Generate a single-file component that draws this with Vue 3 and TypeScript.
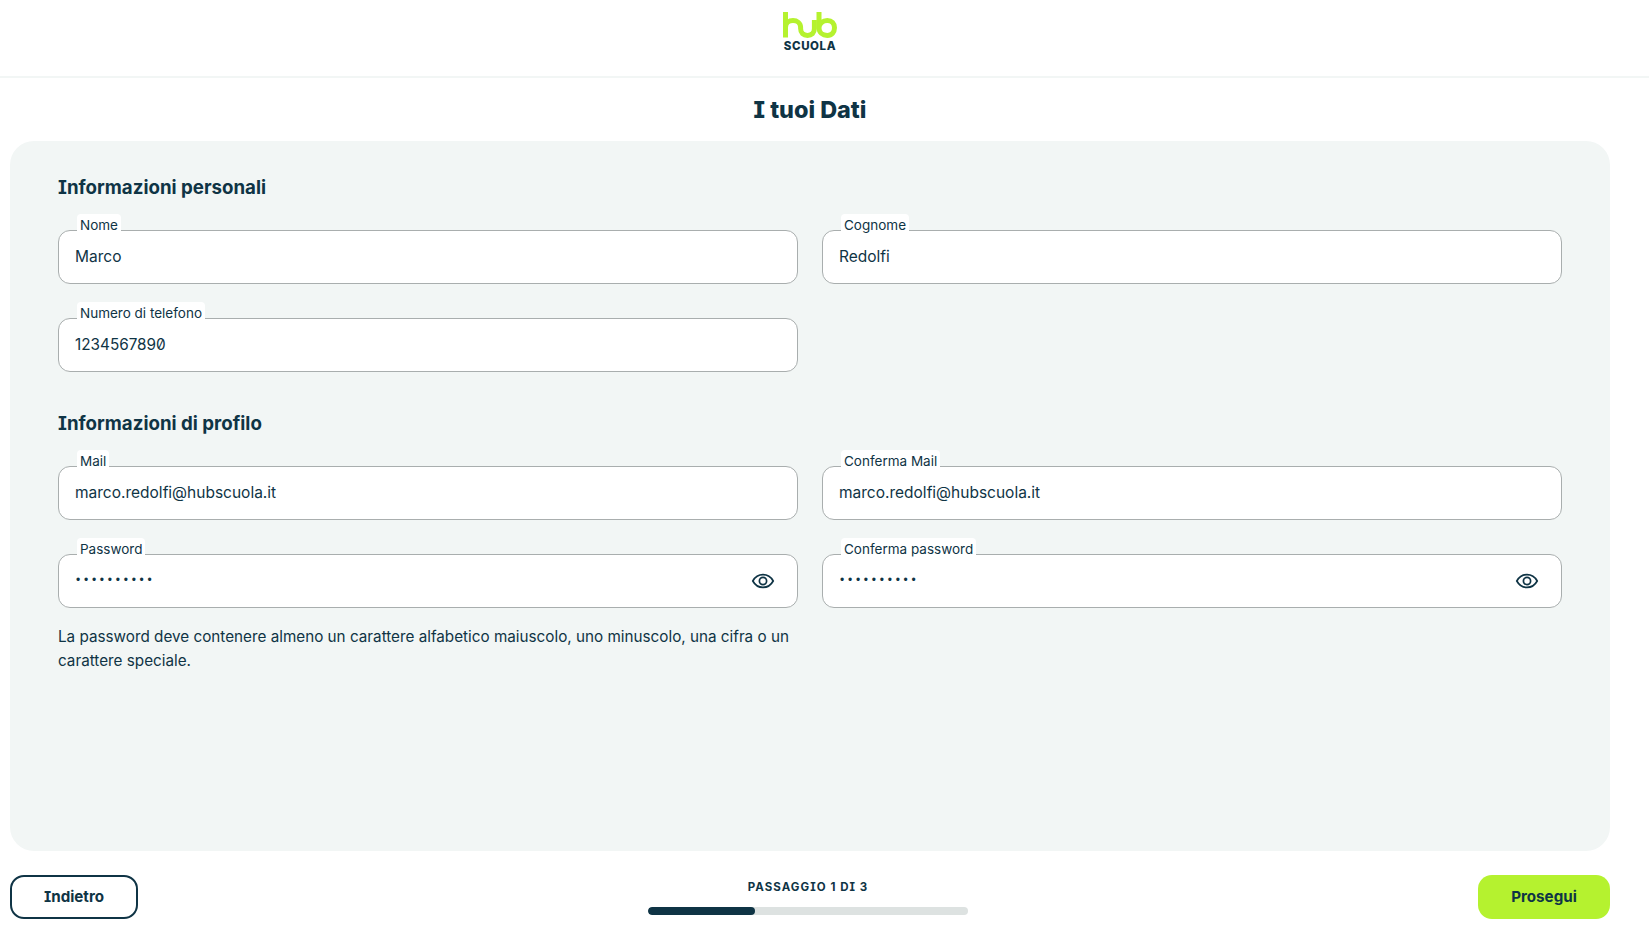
<script setup lang="ts">
interface Field { label: string; value: string; kind?: 'password' | 'digits' }
const personal: Field[] = [
  { label: 'Nome', value: 'Marco' },
  { label: 'Cognome', value: 'Redolfi' },
  { label: 'Numero di telefono', value: '1234567890', kind: 'digits' },
]
const profile: Field[] = [
  { label: 'Mail', value: 'marco.redolfi@hubscuola.it' },
  { label: 'Conferma Mail', value: 'marco.redolfi@hubscuola.it' },
  { label: 'Password', value: '••••••••••', kind: 'password' },
  { label: 'Conferma password', value: '••••••••••', kind: 'password' },
]
const sections = [
  { title: 'Informazioni personali', fields: personal },
  { title: 'Informazioni di profilo', fields: profile },
]
</script>

<template>
  <div class="page">
    <header class="topbar">
      <div class="logo">
        <svg class="logo-mark" viewBox="0 0 54 26" fill="none" stroke="#b5f22f" stroke-width="5">
          <path d="M2.5 0V25.5M2.5 15.5C2.5 11 6 8.6 10 8.6S17.6 11 17.6 15.5V16.5C17.6 21 20.4 23.4 24.5 23.4S31.4 21 31.4 16.5V8" />
          <path d="M36 0V16C36 20.5 39.8 23.4 44.3 23.4S51.5 20.2 51.5 15.8 48.8 8.4 44.3 8.4 36 11.5 36 16" />
        </svg>
        <span class="logo-text">SCUOLA</span>
      </div>
    </header>
    <div class="content">
      <h1 class="title">I tuoi Dati</h1>
      <main class="panel">
        <section v-for="s in sections" :key="s.title" class="section">
          <h2 class="section-title">{{ s.title }}</h2>
          <div class="grid">
            <div v-for="f in s.fields" :key="f.label" class="field">
              <span class="label">{{ f.label }}</span>
              <div class="box">
                <span :class="['value', f.kind]">{{ f.value }}</span>
                <svg v-if="f.kind === 'password'" class="eye" viewBox="0 0 24 24" fill="none" stroke="#0f3445" stroke-width="1.7">
                  <path d="M1.8 12C4.2 7.6 7.8 5.6 12 5.6S19.8 7.6 22.2 12C19.8 16.4 16.2 18.4 12 18.4S4.2 16.4 1.8 12Z" />
                  <circle cx="12" cy="12" r="3.6" />
                </svg>
              </div>
            </div>
          </div>
        </section>
        <p class="hint">La password deve contenere almeno un carattere alfabetico maiuscolo, uno minuscolo, una cifra o un carattere speciale.</p>
      </main>
      <footer class="footer">
        <button class="btn back">Indietro</button>
        <div class="progress">
          <span class="step">PASSAGGIO 1 DI 3</span>
          <div class="track"><div class="fill" :style="{ width: '33.33%' }"></div></div>
        </div>
        <button class="btn next">Prosegui</button>
      </footer>
    </div>
  </div>
</template>

<style>
html, body { margin: 0; background: #fff; }
</style>

<style scoped>
.page {
  height: 935px;
  overflow: hidden;
  font-family: Inter, "Noto Sans", sans-serif;
  font-feature-settings: "cv08", "zero" 0;
  color: #0f3445;
}
.topbar {
  height: 76px;
  border-bottom: 2px solid #f2f6f5;
  display: flex;
  justify-content: center;
  padding-right: 29px;
}
.logo {
  padding-top: 12px;
  display: flex;
  flex-direction: column;
  align-items: center;
  width: 54px;
}
.logo-mark { width: 54px; height: 26px; display: block; }
.logo-text {
  margin-top: 2px;
  font-size: 11.5px;
  line-height: 12px;
  font-weight: 800;
  letter-spacing: 0.6px;
}
.content { width: 1620px; }
.title {
  margin: 0;
  height: 63px;
  line-height: 63px;
  text-align: center;
  font-size: 23.4px;
  font-weight: 800;
}
.panel {
  margin: 0 10px;
  height: 710px;
  box-sizing: border-box;
  background: #f2f6f5;
  border-radius: 24px;
  padding: 33px 48px 0;
}
.section + .section { margin-top: 38px; }
.section-title {
  margin: 0 0 28px;
  font-size: 18.7px;
  line-height: 28px;
  font-weight: 700;
}
.grid {
  display: grid;
  grid-template-columns: 740px 740px;
  gap: 34px 24px;
}
.field { position: relative; }
.label {
  position: absolute;
  left: 19px;
  top: -16px;
  padding: 1px 3px 1px;
  background: #fff;
  border-radius: 4px 4px 0 0;
  font-size: 13.5px;
  line-height: 20px;
}
.box {
  height: 54px;
  box-sizing: border-box;
  border: 1px solid #a9aeae;
  border-radius: 12px;
  background: #fff;
  padding: 0 16px 2px;
  display: flex;
  align-items: center;
  justify-content: space-between;
}
.value { font-size: 15.5px; }
.digits { font-feature-settings: "zero"; font-size: 15.3px; }
.password { margin-left: 1px; letter-spacing: 3.75px; font-family: "Liberation Sans", sans-serif; font-size: 12px; }
.eye { width: 24px; height: 24px; margin: 2px 6px 0 0; }
.hint {
  margin: 17px 0 0;
  width: 740px;
  font-size: 15.25px;
  line-height: 24px;
}
.footer {
  margin: 24px 10px 0;
  height: 44px;
  display: flex;
  justify-content: space-between;
  align-items: center;
}
.btn {
  height: 44px;
  box-sizing: border-box;
  border-radius: 14px;
  padding: 0 0 2px;
  font-family: inherit;
  font-feature-settings: inherit;
  font-size: 15.2px;
  font-weight: 700;
  color: #0f3445;
}
.back { width: 128px; background: #fff; border: 2px solid #0f3445; }
.next { width: 132px; background: #b5f22f; border: none; }
.progress {
  display: flex;
  flex-direction: column;
  align-items: center;
  gap: 13px;
  width: 320px;
}
.step {
  font-size: 11.5px;
  line-height: 14px;
  font-weight: 700;
  letter-spacing: 1.05px;
}
.track {
  width: 100%;
  height: 8px;
  border-radius: 4px;
  background: #dde2e1;
  overflow: hidden;
}
.fill { height: 100%; border-radius: 4px; background: #0f3445; }
</style>
